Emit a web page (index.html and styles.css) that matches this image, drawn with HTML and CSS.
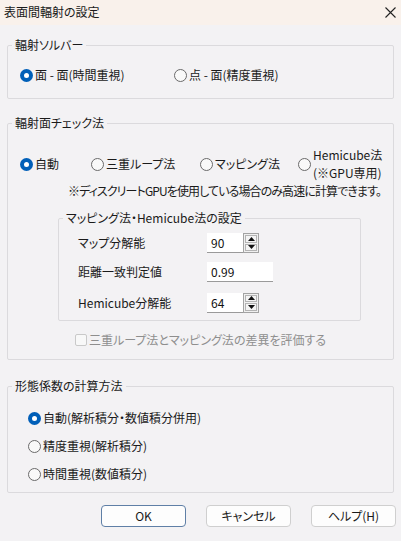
FILE: index.html
```html
<!DOCTYPE html>
<html lang="ja">
<head>
<meta charset="utf-8">
<title>表面間輻射の設定</title>
<link rel="stylesheet" href="styles.css">
</head>
<body>
<div class="titlebar">
  <span class="title">表面間輻射の設定</span>
  <svg class="close" width="11" height="11" viewBox="0 0 11 11"><path d="M0.5 0.5 L10.5 10.5 M10.5 0.5 L0.5 10.5" stroke="#222" stroke-width="1.1" fill="none"/></svg>
</div>

<fieldset class="group g1">
  <legend>輻射ソルバー</legend>
  <div class="g1-row">
    <label class="opt"><span class="radio on"></span><span>面 - 面(時間重視)</span></label>
    <label class="opt"><span class="radio"></span><span>点 - 面(精度重視)</span></label>
  </div>
</fieldset>

<fieldset class="group g2">
  <legend>輻射面チェック法</legend>
  <div class="g2-inner">
    <div class="g2-row">
      <label class="opt"><span class="radio on"></span><span>自動</span></label>
      <label class="opt"><span class="radio"></span><span>三重ループ法</span></label>
      <label class="opt"><span class="radio"></span><span>マッピング法</span></label>
      <label class="opt"><span class="radio"></span><span class="two"><span class="ln">Hemicube法</span><span class="ln">(※GPU専用)</span></span></label>
    </div>
    <div class="note">※ディスクリートGPUを使用している場合のみ高速に計算できます。</div>
    <fieldset class="group sub">
      <legend>マッピング法・Hemicube法の設定</legend>
      <div class="sub-grid">
        <span class="lbl">マップ分解能</span>
        <div class="spin"><span class="field short">90</span><span class="btns"><span class="sb"><svg width="7" height="4" viewBox="0 0 7 4"><path d="M3.5 0 L7 4 L0 4 Z" fill="#111"/></svg></span><span class="sb"><svg width="7" height="4" viewBox="0 0 7 4"><path d="M0 0 L7 0 L3.5 4 Z" fill="#111"/></svg></span></span></div>
        <span class="lbl">距離一致判定値</span>
        <div class="spin"><span class="field long">0.99</span></div>
        <span class="lbl last">Hemicube分解能</span>
        <div class="spin last"><span class="field short">64</span><span class="btns"><span class="sb"><svg width="7" height="4" viewBox="0 0 7 4"><path d="M3.5 0 L7 4 L0 4 Z" fill="#111"/></svg></span><span class="sb"><svg width="7" height="4" viewBox="0 0 7 4"><path d="M0 0 L7 0 L3.5 4 Z" fill="#111"/></svg></span></span></div>
      </div>
    </fieldset>
    <label class="check"><span class="box"></span><span>三重ループ法とマッピング法の差異を評価する</span></label>
  </div>
</fieldset>

<fieldset class="group g3">
  <legend>形態係数の計算方法</legend>
  <div class="g3-inner">
    <label class="opt"><span class="radio on"></span><span>自動(解析積分・数値積分併用)</span></label>
    <label class="opt"><span class="radio"></span><span>精度重視(解析積分)</span></label>
    <label class="opt"><span class="radio"></span><span>時間重視(数値積分)</span></label>
  </div>
</fieldset>

<div class="buttons">
  <button class="btn default">OK</button>
  <button class="btn">キャンセル</button>
  <button class="btn">ヘルプ(H)</button>
</div>
</body>
</html>
```
FILE: styles.css
```css
* { box-sizing: border-box; }
body {
  margin: 0;
  width: 401px;
  height: 541px;
  overflow: hidden;
  background: #f3f2f4;
  font-family: "Noto Sans CJK JP", "Noto Sans", sans-serif;
  font-size: 12px;
  line-height: 16px;
  color: #1a1a1a;
  font-feature-settings: "palt";
}
.titlebar {
  height: 25px;
  display: flex;
  align-items: center;
  justify-content: space-between;
  padding: 0 5px 2px 4px;
  background: #f9f1eb;
}
.title { font-size: 12px; }
.close { margin-top: 2px; }

.group {
  margin: 12px 7px 0;
  padding: 0;
  border: 1px solid #dbdadd;
  border-radius: 2px;
  min-width: 0;
}
.group legend {
  margin-left: 4px;
  padding: 0 3px;
  line-height: 16px;
}
.opt {
  display: flex;
  align-items: center;
  gap: 2px;
  white-space: nowrap;
}
.radio {
  width: 13px;
  height: 13px;
  border-radius: 50%;
  border: 1px solid #6a6a6a;
  background: #f9f9f9;
  flex: none;
  position: relative;
}
.radio.on {
  border: none;
  background: #005fb8;
}
.radio.on::after {
  content: "";
  position: absolute;
  left: 4px;
  top: 4px;
  width: 5px;
  height: 5px;
  border-radius: 50%;
  background: #fff;
}

.g1 { margin-top: 12px; }
.g1-row {
  display: grid;
  grid-template-columns: 154px auto;
  padding: 14px 12px 15px;
  height: 45px;
}

.g2 { margin-top: 16px; }
.g2-inner { padding: 15px 12px 11px; }
.g2-row {
  display: grid;
  grid-template-columns: 71px 109px 98px auto;
  align-items: center;
  height: 30px;
}
.two {
  display: flex;
  flex-direction: column;
}
.two .ln { line-height: 18px; }
.note {
  margin-top: 7px;
  padding-left: 48px;
  white-space: nowrap;
  letter-spacing: -0.9px;
}
.sub {
  margin: 11px 0 0 38px;
  width: 303px;
}
.sub-grid {
  display: grid;
  grid-template-columns: 129px auto;
  grid-auto-rows: 20px;
  row-gap: 9px;
  align-items: center;
  padding: 7px 0 9px 19px;
}
.sub-grid .last { margin-top: 3px; }
.spin { display: flex; height: 20px; }
.field {
  height: 20px;
  background: #fff;
  border-bottom: 1px solid #9a9a9a;
  padding: 2px 0 0 4px;
  color: #111;
}
.field.short { width: 36px; }
.field.long { width: 66px; }
.btns {
  width: 16px;
  height: 20px;
  display: flex;
  flex-direction: column;
  border: 1px solid #a3a3a3;
  background: #f0f0f0;
  padding: 1px;
  gap: 1px;
}
.sb {
  flex: 1;
  display: flex;
  align-items: center;
  justify-content: center;
  border: 1px solid #b4b4b4;
  background: #f4f4f4;
}
.check {
  display: flex;
  align-items: center;
  gap: 2px;
  margin-top: 11px;
  padding-left: 55px;
  color: #8e8e8e;
}
.box {
  width: 12px;
  height: 12px;
  border: 1px solid #c9c9c9;
  border-radius: 2px;
  background: #f8f8f8;
}

.g3 { margin-top: 18px; }
.g3-inner {
  display: flex;
  flex-direction: column;
  padding: 16px 20px 10px;
  gap: 12px;
}

.buttons {
  display: flex;
  justify-content: flex-end;
  gap: 20px;
  margin-top: 12px;
  padding-right: 5px;
}
.btn {
  width: 85px;
  height: 22px;
  font: inherit;
  font-size: 12px;
  color: #1a1a1a;
  background: #fdfdfd;
  border: 1px solid #cfcfcf;
  border-radius: 4px;
  padding: 0;
}
.btn.default { border-color: #5f7fa6; }
```
